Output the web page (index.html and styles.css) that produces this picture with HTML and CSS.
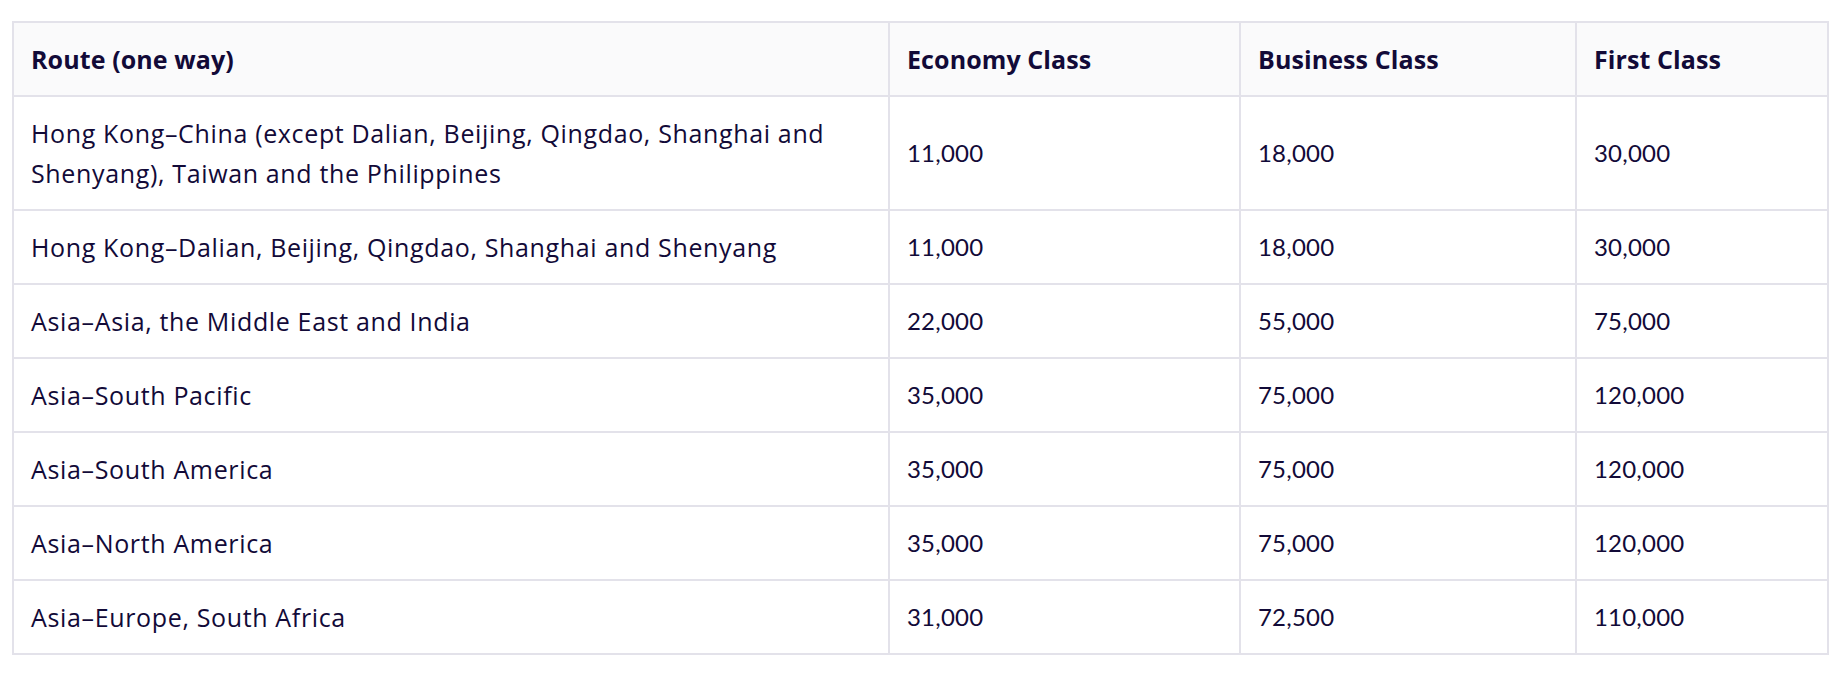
FILE: index.html
```html
<!DOCTYPE html>
<html lang="en">
<head>
<meta charset="utf-8">
<title>Redemption table</title>
<link rel="stylesheet" href="styles.css">
</head>
<body>
<div class="wrap">
  <table class="miles">
    <colgroup>
      <col class="c-route">
      <col class="c-eco">
      <col class="c-bus">
      <col class="c-first">
    </colgroup>
    <thead>
      <tr>
        <th>Route (one way)</th>
        <th>Economy Class</th>
        <th>Business Class</th>
        <th>First Class</th>
      </tr>
    </thead>
    <tbody>
      <tr>
        <td class="route">Hong Kong–China (except Dalian, Beijing, Qingdao, Shanghai and Shenyang), Taiwan and the Philippines</td>
        <td class="num">11,000</td>
        <td class="num">18,000</td>
        <td class="num">30,000</td>
      </tr>
      <tr>
        <td class="route">Hong Kong–Dalian, Beijing, Qingdao, Shanghai and Shenyang</td>
        <td class="num">11,000</td>
        <td class="num">18,000</td>
        <td class="num">30,000</td>
      </tr>
      <tr>
        <td class="route">Asia–Asia, the Middle East and India</td>
        <td class="num">22,000</td>
        <td class="num">55,000</td>
        <td class="num">75,000</td>
      </tr>
      <tr>
        <td class="route">Asia–South Pacific</td>
        <td class="num">35,000</td>
        <td class="num">75,000</td>
        <td class="num">120,000</td>
      </tr>
      <tr>
        <td class="route">Asia–South America</td>
        <td class="num">35,000</td>
        <td class="num">75,000</td>
        <td class="num">120,000</td>
      </tr>
      <tr>
        <td class="route">Asia–North America</td>
        <td class="num">35,000</td>
        <td class="num">75,000</td>
        <td class="num">120,000</td>
      </tr>
      <tr>
        <td class="route">Asia–Europe, South Africa</td>
        <td class="num">31,000</td>
        <td class="num">72,500</td>
        <td class="num">110,000</td>
      </tr>
    </tbody>
  </table>
</div>
</body>
</html>
```
FILE: styles.css
```css
html, body {
  margin: 0;
  padding: 0;
  background: #ffffff;
}

.wrap {
  padding: 21px 11px 0 12px;
}

.miles {
  width: 1817px;
  table-layout: fixed;
  border-collapse: separate;
  border-spacing: 0;
  border-top: 2px solid #e3e2ea;
  border-left: 2px solid #e3e2ea;
  font-family: "Open Sans", "Liberation Sans", sans-serif;
  font-size: 25px;
  line-height: 40px;
  color: #120a38;
}

.c-route { width: 876px; }
.c-eco { width: 351px; }
.c-bus { width: 336px; }
.c-first { width: 252px; }

.miles th,
.miles td {
  padding: 16px 16px 16px 17px;
  border-right: 2px solid #e3e2ea;
  border-bottom: 2px solid #e3e2ea;
  text-align: left;
  vertical-align: middle;
}

.miles th {
  background: #fafafb;
  font-weight: 700;
  letter-spacing: 0.1px;
}

.miles td.route {
  font-weight: 400;
  letter-spacing: 0.65px;
}

.miles td.num {
  font-family: "Lato", "Liberation Sans", sans-serif;
  font-size: 24px;
  font-weight: 400;
  letter-spacing: 0.2px;
}
```
